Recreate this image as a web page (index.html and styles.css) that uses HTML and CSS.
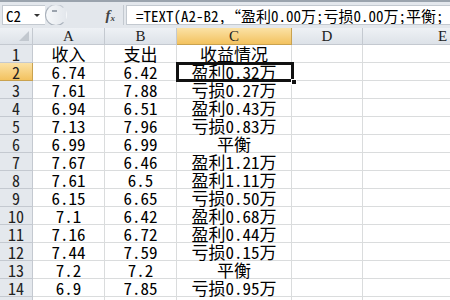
FILE: index.html
```html
<!DOCTYPE html>
<html lang="zh-CN">
<head>
  <meta charset="UTF-8">
  <title>收益情况</title>
  <link rel="stylesheet" href="styles.css">
</head>
<body>

  <div class="formula-bar">
    <div class="name-box">
      <span class="cell-ref">C2</span>
      <span class="drop"></span>
    </div>
    <div class="bar-tools">
      <span class="grip"></span>
      <span class="fx">f<sub>x</sub></span>
    </div>
    <div class="formula-input">=TEXT(A2-B2,“盈利0.00万;亏损0.00万;平衡;“</div>
  </div>

  <div class="sheet">
    <div class="hd corner"><span class="tri"></span></div>
    <div class="hd">A</div>
    <div class="hd">B</div>
    <div class="hd sel">C</div>
    <div class="hd">D</div>
    <div class="hd">E</div>

    <div class="rh">1</div><div class="c">收入</div><div class="c">支出</div><div class="c">收益情况</div><div class="c"></div><div class="c"></div>
    <div class="rh sel">2</div><div class="c">6.74</div><div class="c">6.42</div><div class="c">盈利0.32万</div><div class="c"></div><div class="c"></div>
    <div class="rh">3</div><div class="c">7.61</div><div class="c">7.88</div><div class="c">亏损0.27万</div><div class="c"></div><div class="c"></div>
    <div class="rh">4</div><div class="c">6.94</div><div class="c">6.51</div><div class="c">盈利0.43万</div><div class="c"></div><div class="c"></div>
    <div class="rh">5</div><div class="c">7.13</div><div class="c">7.96</div><div class="c">亏损0.83万</div><div class="c"></div><div class="c"></div>
    <div class="rh">6</div><div class="c">6.99</div><div class="c">6.99</div><div class="c">平衡</div><div class="c"></div><div class="c"></div>
    <div class="rh">7</div><div class="c">7.67</div><div class="c">6.46</div><div class="c">盈利1.21万</div><div class="c"></div><div class="c"></div>
    <div class="rh">8</div><div class="c">7.61</div><div class="c">6.5</div><div class="c">盈利1.11万</div><div class="c"></div><div class="c"></div>
    <div class="rh">9</div><div class="c">6.15</div><div class="c">6.65</div><div class="c">亏损0.50万</div><div class="c"></div><div class="c"></div>
    <div class="rh">10</div><div class="c">7.1</div><div class="c">6.42</div><div class="c">盈利0.68万</div><div class="c"></div><div class="c"></div>
    <div class="rh">11</div><div class="c">7.16</div><div class="c">6.72</div><div class="c">盈利0.44万</div><div class="c"></div><div class="c"></div>
    <div class="rh">12</div><div class="c">7.44</div><div class="c">7.59</div><div class="c">亏损0.15万</div><div class="c"></div><div class="c"></div>
    <div class="rh">13</div><div class="c">7.2</div><div class="c">7.2</div><div class="c">平衡</div><div class="c"></div><div class="c"></div>
    <div class="rh">14</div><div class="c">6.9</div><div class="c">7.85</div><div class="c">亏损0.95万</div><div class="c"></div><div class="c"></div>
    <div class="rh"></div><div class="c"></div><div class="c"></div><div class="c"></div><div class="c"></div><div class="c"></div>

    <!-- celda activa C2 -->
    <div class="active-cell"><span class="handle"></span></div>
  </div>

</body>
</html>
```

FILE: styles.css
```css
* {
  box-sizing: border-box;
}

body {
  margin: 0;
  width: 450px;
  height: 300px;
  overflow: hidden;
  background-color: white;
  font-family: "Noto Sans Mono CJK SC", "Liberation Mono", "Noto Sans CJK SC", monospace;
  color: #000;
}

/* Barra de fórmulas */
.formula-bar {
  display: flex;
  align-items: stretch;
  height: 28px;
  padding: 3px 0 3px 2px;
  background-color: #e3e7ec;
  border-top: 2px solid #9aa3ad;
}

.name-box {
  display: flex;
  align-items: center;
  justify-content: space-between;
  width: 43px;
  padding: 0 5px 0 3px;
  background-color: white;
  border: 1px solid #c3c9d0;
  border-right: none;
}

.cell-ref {
  font-size: 15px;
  line-height: 1;
}

.drop {
  width: 0;
  height: 0;
  border-left: 3px solid transparent;
  border-right: 3px solid transparent;
  border-top: 3px solid #333;
}

.bar-tools {
  display: flex;
  align-items: center;
  justify-content: space-between;
  width: 79px;
  padding-right: 8px;
  border-right: 1px solid #c3c9d0;
  overflow: hidden;
}

.grip {
  position: relative;
  width: 22px;
  height: 22px;
  border-radius: 50%;
  border: 1px solid #a9b1bb;
  border-right-color: transparent;
  border-top-color: #c4cad2;
  background: linear-gradient(90deg, #f6f8fa, #e3e7ec);
}

.grip::after {
  content: "";
  position: absolute;
  left: 6px;
  top: 5px;
  width: 5px;
  height: 2px;
  background-color: #9ba3ad;
}

.fx {
  font-family: "Liberation Serif", serif;
  font-style: italic;
  font-weight: bold;
  font-size: 15px;
  color: #444;
}

.fx sub {
  font-size: 9px;
  vertical-align: -1px;
}

.formula-input {
  flex: 1;
  margin-left: 2px;
  padding-left: 9px;
  background-color: white;
  border: 1px solid #c3c9d0;
  border-right: none;
  font-size: 15px;
  line-height: 20px;
  white-space: nowrap;
  overflow: hidden;
}

/* Hoja */
.sheet {
  position: relative;
  display: grid;
  grid-template-columns: 33px 72px 72px 115px 71px 160px;
  grid-template-rows: 17px repeat(15, 18px);
  font-size: 17px;
}

.hd,
.rh {
  display: flex;
  align-items: center;
  justify-content: center;
  background: linear-gradient(#eef1f5, #dde2e8);
  border-right: 1px solid #c4c9d0;
  border-bottom: 1px solid #c4c9d0;
  color: #222;
  font-size: 16px;
  line-height: 1;
}

.hd {
  font-family: "Liberation Serif", serif;
  font-size: 15px;
}

.rh {
  background: #e4e8ed;
}

.hd.sel,
.rh.sel {
  background: linear-gradient(#fbe2a6, #f3c25f);
  border-color: #c9a24f;
}

.corner {
  position: relative;
}

.tri {
  position: absolute;
  right: 3px;
  bottom: 3px;
  width: 0;
  height: 0;
  border-left: 10px solid transparent;
  border-bottom: 10px solid #c2c8cf;
}

.c {
  display: flex;
  align-items: center;
  justify-content: center;
  border-right: 1px solid #dadcdd;
  border-bottom: 1px solid #dadcdd;
  white-space: nowrap;
  line-height: 1;
}

.active-cell {
  position: absolute;
  left: 176px;
  top: 34px;
  width: 118px;
  height: 20px;
  border: 3px solid #111;
}

.handle {
  position: absolute;
  right: -6px;
  bottom: -6px;
  width: 6px;
  height: 6px;
  background-color: #111;
  border: 1px solid white;
}
```
